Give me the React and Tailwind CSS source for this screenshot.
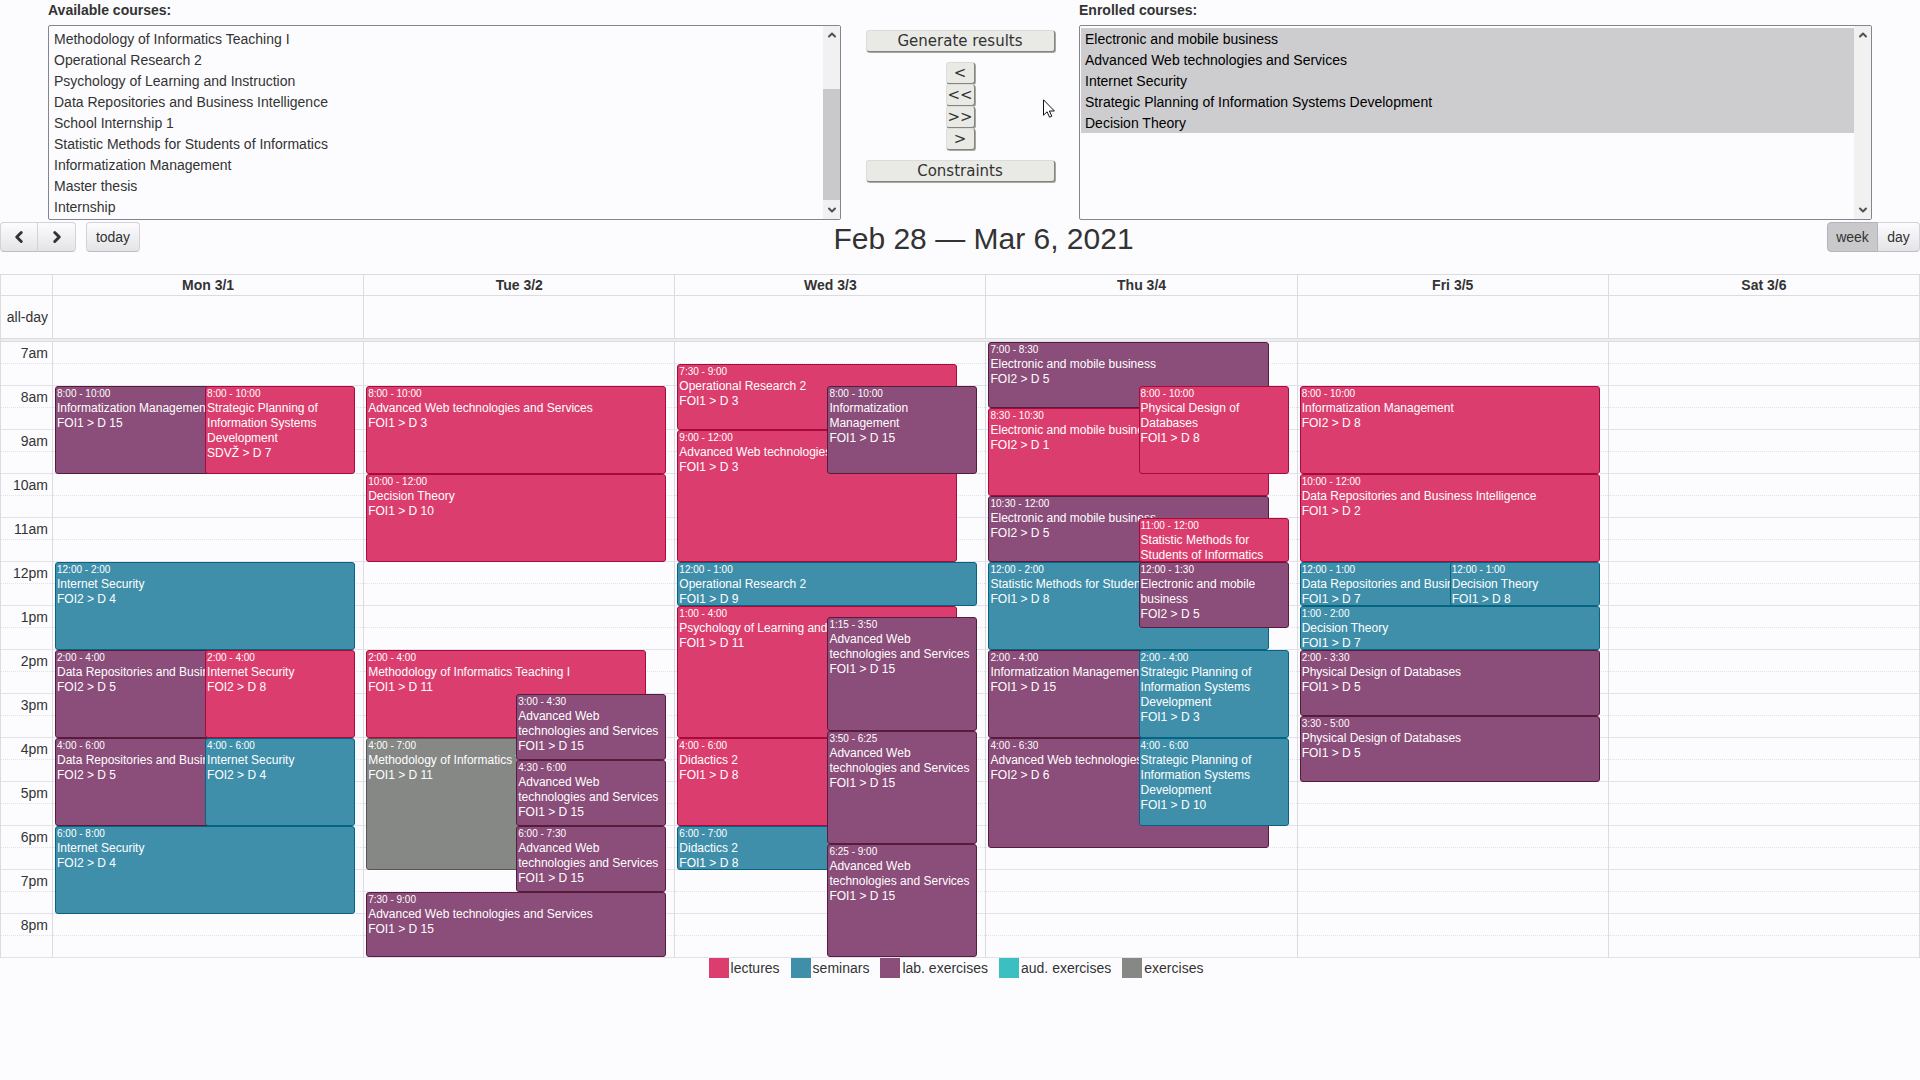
import { ChevronUp, ChevronDown, ChevronLeft, ChevronRight } from "lucide-react";

const AVAILABLE = [
  "Methodology of Informatics Teaching I",
  "Operational Research 2",
  "Psychology of Learning and Instruction",
  "Data Repositories and Business Intelligence",
  "School Internship 1",
  "Statistic Methods for Students of Informatics",
  "Informatization Management",
  "Master thesis",
  "Internship",
];

const ENROLLED = [
  "Electronic and mobile business",
  "Advanced Web technologies and Services",
  "Internet Security",
  "Strategic Planning of Information Systems Development",
  "Decision Theory",
];

const KINDS = {
  lecture: "bg-[#db3e6e] border-[#a80a3a]",
  seminar: "bg-[#3f8fab] border-[#056482]",
  lab: "bg-[#8b4d79] border-[#571c3c]",
  aud: "bg-[#3cbfc0] border-[#3cbfc0]",
  exercise: "bg-[#868886] border-[#555755]",
};

const LEGEND = [
  ["lecture", "lectures"],
  ["seminar", "seminars"],
  ["lab", "lab. exercises"],
  ["aud", "aud. exercises"],
  ["exercise", "exercises"],
];

/* Slot of an event inside its day: whole width, right half, or under a neighbour. */
const SPANS = {
  full: "left-0 right-0",
  right: "left-1/2 right-0",
  under: "left-0 right-5",
};

const AWS = "Advanced Web technologies and Services";
const OR2 = "Operational Research 2";
const DRBI = "Data Repositories and Business Intelligence";
const SP = "Strategic Planning of Information Systems Development";
const IM = "Informatization Management";
const IS = "Internet Security";
const EMB = "Electronic and mobile business";
const SM = "Statistic Methods for Students of Informatics";
const PD = "Physical Design of Databases";

/* [start, end, label, title, room, kind, span] with hours on a 24-hour clock */
const DAYS = [
  {
    name: "Mon 3/1",
    events: [
      [8, 10, "8:00 - 10:00", IM, "FOI1 > D 15", "lab", "under"],
      [8, 10, "8:00 - 10:00", SP, "SDVŽ > D 7", "lecture", "right"],
      [12, 14, "12:00 - 2:00", IS, "FOI2 > D 4", "seminar", "full"],
      [14, 16, "2:00 - 4:00", DRBI, "FOI2 > D 5", "lab", "under"],
      [14, 16, "2:00 - 4:00", IS, "FOI2 > D 8", "lecture", "right"],
      [16, 18, "4:00 - 6:00", DRBI, "FOI2 > D 5", "lab", "under"],
      [16, 18, "4:00 - 6:00", IS, "FOI2 > D 4", "seminar", "right"],
      [18, 20, "6:00 - 8:00", IS, "FOI2 > D 4", "seminar", "full"],
    ],
  },
  {
    name: "Tue 3/2",
    events: [
      [8, 10, "8:00 - 10:00", AWS, "FOI1 > D 3", "lecture", "full"],
      [10, 12, "10:00 - 12:00", "Decision Theory", "FOI1 > D 10", "lecture", "full"],
      [14, 16, "2:00 - 4:00", "Methodology of Informatics Teaching I", "FOI1 > D 11", "lecture", "under"],
      [16, 19, "4:00 - 7:00", "Methodology of Informatics Teaching I", "FOI1 > D 11", "exercise", "under"],
      [15, 16.5, "3:00 - 4:30", AWS, "FOI1 > D 15", "lab", "right"],
      [16.5, 18, "4:30 - 6:00", AWS, "FOI1 > D 15", "lab", "right"],
      [18, 19.5, "6:00 - 7:30", AWS, "FOI1 > D 15", "lab", "right"],
      [19.5, 21, "7:30 - 9:00", AWS, "FOI1 > D 15", "lab", "full"],
    ],
  },
  {
    name: "Wed 3/3",
    events: [
      [7.5, 9, "7:30 - 9:00", OR2, "FOI1 > D 3", "lecture", "under"],
      [9, 12, "9:00 - 12:00", AWS, "FOI1 > D 3", "lecture", "under"],
      [8, 10, "8:00 - 10:00", IM, "FOI1 > D 15", "lab", "right"],
      [12, 13, "12:00 - 1:00", OR2, "FOI1 > D 9", "seminar", "full"],
      [13, 16, "1:00 - 4:00", "Psychology of Learning and Instruction", "FOI1 > D 11", "lecture", "under"],
      [16, 18, "4:00 - 6:00", "Didactics 2", "FOI1 > D 8", "lecture", "under"],
      [18, 19, "6:00 - 7:00", "Didactics 2", "FOI1 > D 8", "seminar", "under"],
      [13.25, 15.83, "1:15 - 3:50", AWS, "FOI1 > D 15", "lab", "right"],
      [15.83, 18.4, "3:50 - 6:25", AWS, "FOI1 > D 15", "lab", "right"],
      [18.4, 21, "6:25 - 9:00", AWS, "FOI1 > D 15", "lab", "right"],
    ],
  },
  {
    name: "Thu 3/4",
    events: [
      [7, 8.5, "7:00 - 8:30", EMB, "FOI2 > D 5", "lab", "under"],
      [8.5, 10.5, "8:30 - 10:30", EMB, "FOI2 > D 1", "lecture", "under"],
      [8, 10, "8:00 - 10:00", PD, "FOI1 > D 8", "lecture", "right"],
      [10.5, 12, "10:30 - 12:00", EMB, "FOI2 > D 5", "lab", "under"],
      [11, 12, "11:00 - 12:00", SM, "", "lecture", "right"],
      [12, 14, "12:00 - 2:00", SM, "FOI1 > D 8", "seminar", "under"],
      [12, 13.5, "12:00 - 1:30", EMB, "FOI2 > D 5", "lab", "right"],
      [14, 16, "2:00 - 4:00", IM, "FOI1 > D 15", "lab", "under"],
      [14, 16, "2:00 - 4:00", SP, "FOI1 > D 3", "seminar", "right"],
      [16, 18.5, "4:00 - 6:30", AWS, "FOI2 > D 6", "lab", "under"],
      [16, 18, "4:00 - 6:00", SP, "FOI1 > D 10", "seminar", "right"],
    ],
  },
  {
    name: "Fri 3/5",
    events: [
      [8, 10, "8:00 - 10:00", IM, "FOI2 > D 8", "lecture", "full"],
      [10, 12, "10:00 - 12:00", DRBI, "FOI1 > D 2", "lecture", "full"],
      [12, 13, "12:00 - 1:00", DRBI, "FOI1 > D 7", "seminar", "under"],
      [12, 13, "12:00 - 1:00", "Decision Theory", "FOI1 > D 8", "seminar", "right"],
      [13, 14, "1:00 - 2:00", "Decision Theory", "FOI1 > D 7", "seminar", "full"],
      [14, 15.5, "2:00 - 3:30", PD, "FOI1 > D 5", "lab", "full"],
      [15.5, 17, "3:30 - 5:00", PD, "FOI1 > D 5", "lab", "full"],
    ],
  },
  { name: "Sat 3/6", events: [] },
];

const HOURS = ["7am", "8am", "9am", "10am", "11am", "12pm", "1pm", "2pm", "3pm", "4pm", "5pm", "6pm", "7pm", "8pm"];
const HOUR_HEIGHT = 44;
const FIRST_HOUR = 7;
const GRID_HEIGHT = HOURS.length * HOUR_HEIGHT - 1;

function CourseList({ id, label, courses, selected = [], thumb }) {
  return (
    <div className="min-w-0 flex-1">
      <label htmlFor={id} className="block h-[25px] text-sm leading-5 font-bold">
        {label}
      </label>
      <div className="flex h-[195px] rounded-[2px] border border-[#85858f]">
        <select
          id={id}
          multiple
          defaultValue={selected}
          className="block h-full min-w-0 flex-1 appearance-none overflow-hidden bg-transparent py-[2px] pl-px text-sm outline-none [scrollbar-width:none]"
        >
          {courses.map((course) => (
            <option
              key={course}
              value={course}
              className="h-[21px] min-h-0 px-1 pt-[3px] pb-0 text-[#333] checked:bg-[#cdcdcf] checked:bg-[linear-gradient(#cdcdcf,#cdcdcf)] checked:text-black"
            >
              {course}
            </option>
          ))}
        </select>
        <div aria-hidden="true" className="flex w-[17px] flex-col items-center justify-between bg-[#f1f1f2]">
          <ChevronUp className="mt-[3px] size-3 text-[#505050]" strokeWidth={4} />
          {thumb && <div className="mt-12 w-full flex-1 bg-[#c9c9cb]" />}
          <ChevronDown className={thumb ? "mt-1 mb-[3px] size-3 text-[#505050]" : "mb-[3px] size-3 text-[#505050]"} strokeWidth={4} />
        </div>
      </div>
    </div>
  );
}

const RAISED =
  "h-[22px] rounded-[3px] border border-t-[#dcdcd8] border-l-[#dcdcd8] border-r-[#85857c] border-b-[#85857c] bg-[#e9e9e6] font-['DejaVu_Sans',sans-serif] text-[15px] leading-5 shadow-[1px_1px_0_#a8a8a0] whitespace-nowrap";

function Mouse() {
  return (
    <svg viewBox="0 0 12 19" className="absolute top-[99px] right-6 h-[19px] w-3" aria-hidden="true">
      <path d="M.5.8v15.4l3.6-3.4 2.4 5.4 2.3-1-2.4-5.2h5z" fill="#fff" stroke="#111" strokeWidth="1" />
    </svg>
  );
}

function Event({ event }) {
  const [start, end, time, title, room, kind, span] = event;
  const top = Math.round((start - FIRST_HOUR) * HOUR_HEIGHT);
  const bottom = Math.min(Math.round((end - FIRST_HOUR) * HOUR_HEIGHT), GRID_HEIGHT);
  return (
    <a
      href="#event"
      className={`absolute block overflow-hidden rounded-[3px] border px-px text-xs leading-[15px] text-white ${KINDS[kind]} ${SPANS[span]}`}
      style={{ top, height: bottom - top }}
    >
      <div className="text-[10px] leading-[14px] whitespace-nowrap">{time}</div>
      <div>{title}</div>
      {room && <div>{room}</div>}
    </a>
  );
}

const TOOL =
  "h-[30px] border border-[#d2d2da] border-b-[#bcbcc8] bg-linear-to-b from-[#fcfcfe] to-[#e4e4e6] text-sm leading-5";
const COLUMNS = "grid grid-cols-[51px_repeat(6,minmax(0,1fr))]";

export default function App() {
  return (
    <div className="min-h-screen bg-[#fcfcfe] font-['Liberation_Sans',Arial,sans-serif] text-sm text-[#333]">
      <section className="flex px-12">
        <CourseList id="available" label="Available courses:" courses={AVAILABLE} thumb />
        <div className="relative flex w-[238px] flex-col items-center pt-[30px]">
          <button type="button" className={`${RAISED} w-[189px]`}>Generate results</button>
          <div className="my-[10px] flex flex-col">
            {["<", "<<", ">>", ">"].map((sign) => (
              <button key={sign} type="button" className={`${RAISED} w-[29px]`}>
                {sign}
              </button>
            ))}
          </div>
          <button type="button" className={`${RAISED} w-[189px]`}>Constraints</button>
          <Mouse />
        </div>
        <CourseList id="enrolled" label="Enrolled courses:" courses={ENROLLED} selected={ENROLLED} />
      </section>

      <header className="mt-[2px] grid grid-cols-[140px_1fr_93px] items-start">
        <div className="flex">
          <button type="button" aria-label="previous" className={`${TOOL} flex w-[38px] items-center justify-center rounded-l`}>
            <ChevronLeft className="size-[18px]" strokeWidth={4} />
          </button>
          <button type="button" aria-label="next" className={`${TOOL} -ml-px flex w-[39px] items-center justify-center rounded-r`}>
            <ChevronRight className="size-[18px]" strokeWidth={4} />
          </button>
          <button type="button" className={`${TOOL} ml-[10px] w-[54px] rounded`}>today</button>
        </div>
        <h2 className="text-center text-[30px] leading-[34px]">Feb 28 — Mar 6, 2021</h2>
        <div className="flex">
          <button type="button" className="h-[30px] w-[51px] rounded-l border border-[#b4b4bc] bg-[#c9c9cb] text-sm leading-5">
            week
          </button>
          <button type="button" className={`${TOOL} w-[42px] rounded-r border-l-0`}>day</button>
        </div>
      </header>

      <main className="mt-[18px] border-x border-[#dcdce0]">
        <div className={`${COLUMNS} h-[22px] border-y border-[#dcdce0] text-center leading-5 font-bold`}>
          <div />
          {DAYS.map((day) => (
            <div key={day.name} className="border-l border-[#dcdce0]">
              {day.name}
            </div>
          ))}
        </div>
        <div className={`${COLUMNS} h-[42px]`}>
          <div className="pr-1 text-right leading-[43px]">all-day</div>
          {DAYS.map((day) => (
            <div key={day.name} className="border-l border-[#dcdce0]" />
          ))}
        </div>
        <div className="h-1 border-y border-[#dcdce0] bg-[#ededee]" />
        <div className={COLUMNS}>
          <div>
            {HOURS.map((hour) => (
              <div key={hour} className="h-11 border-b border-[#e2e2ea] text-right">
                <div className="h-[22px] border-b border-dotted border-[#e2e2ea] pr-1 leading-[22px]">{hour}</div>
              </div>
            ))}
          </div>
          {DAYS.map((day) => (
            <div key={day.name} className="relative border-l border-[#dcdce0]">
              {HOURS.map((hour) => (
                <div key={hour} className="h-11 border-b border-[#e2e2ea]">
                  <div className="h-[22px] border-b border-dotted border-[#e2e2ea]" />
                </div>
              ))}
              <div className="absolute inset-y-0 right-[8px] left-[2px]">
                {day.events.map((event, i) => (
                  <Event key={i} event={event} />
                ))}
              </div>
            </div>
          ))}
        </div>
      </main>

      <footer className="flex justify-center gap-[11px] pr-2">
        {LEGEND.map(([kind, label]) => (
          <div key={kind} className="flex items-center gap-[2px]">
            <span className={`size-5 border-0 ${KINDS[kind]}`} />
            {label}
          </div>
        ))}
      </footer>
    </div>
  );
}
